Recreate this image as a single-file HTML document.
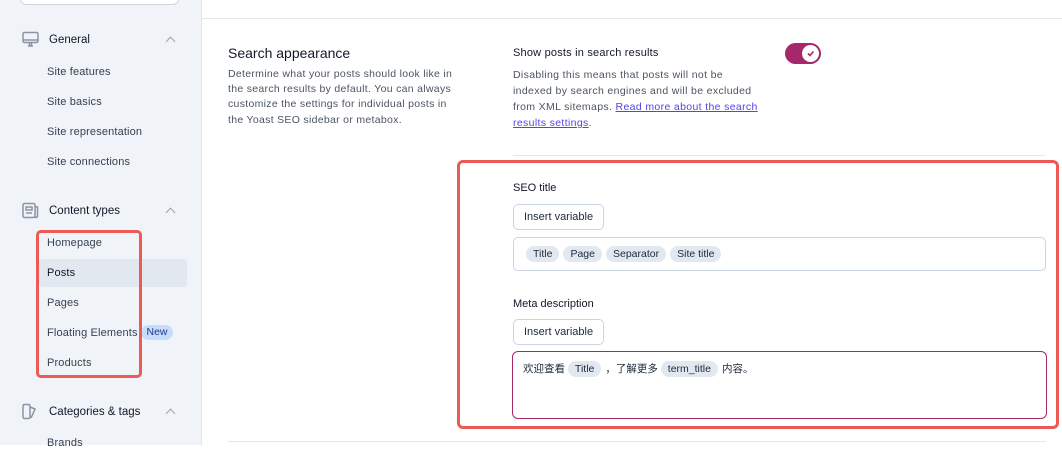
<!DOCTYPE html><html><head><style>
*{box-sizing:border-box;margin:0;padding:0}
body{width:1062px;height:445px;overflow:hidden;font-family:"Liberation Sans","Noto Sans CJK SC",sans-serif;font-size:11px;color:#1e293b;background:#fff;position:relative}
.a{position:absolute}
.side{left:0;top:0;width:202px;height:445px;background:#f0f3f8;border-right:1px solid #e2e8f0}
.sub{left:47px;color:#374151;font-size:11px;letter-spacing:0.15px}
.hd{left:49px;font-size:11.5px;color:#111827}
.chev{left:167px;width:7px;height:7px;border-left:1.5px solid #9ca3af;border-top:1.5px solid #9ca3af;transform:rotate(45deg)}
.btn{border:1px solid #cbd5e1;border-radius:5px;background:#fff;font-size:11px;padding:0 10px;line-height:24px;color:#1e293b}
.pill{display:inline-block;background:#e2e8f0;border-radius:9px;padding:0 7px;line-height:16px;margin-right:4px;font-size:10.5px}
</style></head><body>
<div class="a side"></div>
<div class="a" style="left:20px;top:-10px;width:159px;height:15px;border:1px solid #d1d5db;border-radius:6px;background:#fff"></div>
<svg class="a" style="left:22px;top:31px" width="17" height="17" viewBox="0 0 17 17" fill="none" stroke="#8a94a6" stroke-width="1.5"><rect x="1" y="1.5" width="15" height="10" rx="1.5"/><path d="M1 9h15M6 15h5M7.5 12v3M9.5 12v3"/></svg>
<div class="a hd" style="top:34px">General</div><div class="a chev" style="top:38px"></div>
<div class="a sub" style="top:66px">Site features</div>
<div class="a sub" style="top:96px">Site basics</div>
<div class="a sub" style="top:126px">Site representation</div>
<div class="a sub" style="top:156px">Site connections</div>
<svg class="a" style="left:22px;top:202px" width="17" height="17" viewBox="0 0 17 17" fill="none" stroke="#8a94a6" stroke-width="1.5"><rect x="1" y="1.5" width="12" height="14" rx="1.5"/><path d="M13 5h2.5v9a1.5 1.5 0 0 1-3 0M4 5h6v3H4zM4 11h6"/></svg>
<div class="a hd" style="top:205px">Content types</div><div class="a chev" style="top:209px"></div>
<div class="a" style="left:39px;top:259px;width:148px;height:28px;background:#e2e8f0;border-radius:4px"></div>
<div class="a sub" style="top:237px">Homepage</div>
<div class="a sub" style="top:267px;color:#111827">Posts</div>
<div class="a sub" style="top:297px">Pages</div>
<div class="a sub" style="top:327px">Floating Elements</div>
<div class="a" style="left:141px;top:325px;width:32px;height:15px;background:#c7dcfb;border-radius:8px;font-size:10.5px;color:#1e3a8a;text-align:center;line-height:15px">New</div>
<div class="a sub" style="top:357px">Products</div>
<div class="a" style="left:36px;top:230px;width:106px;height:148px;border:3px solid #ec5a55;border-radius:5px"></div>
<svg class="a" style="left:22px;top:403px" width="17" height="17" viewBox="0 0 17 17" fill="none" stroke="#8a94a6" stroke-width="1.5"><rect x="1" y="1.5" width="7" height="14" rx="1.5"/><path d="M8 4l5 2-4 9M4 13h.1"/></svg>
<div class="a hd" style="top:406px">Categories &amp; tags</div><div class="a chev" style="top:410px"></div>
<div class="a sub" style="top:437px">Brands</div>
<div class="a" style="left:202px;top:18px;width:860px;height:1px;background:#e5e7eb"></div>
<div class="a" style="left:228px;top:45px;font-size:14px;color:#111827">Search appearance</div>
<div class="a" style="left:228px;top:67px;width:233px;font-size:10.5px;line-height:15.2px;color:#4b5563;letter-spacing:0.3px">Determine what your posts should look like in the search results by default. You can always customize the settings for individual posts in the Yoast SEO sidebar or metabox.</div>
<div class="a" style="left:513px;top:47px;font-size:11px;color:#111827;letter-spacing:0.2px">Show posts in search results</div>
<div class="a" style="left:513px;top:67px;width:250px;font-size:10.5px;line-height:16px;color:#4b5563;letter-spacing:0.35px">Disabling this means that posts will not be indexed by search engines and will be excluded from XML sitemaps. <span style="color:#4f46e5;text-decoration:underline">Read more about the search results settings</span>.</div>
<div class="a" style="left:785px;top:43px;width:36px;height:21px;background:#a4286a;border-radius:11px"></div>
<div class="a" style="left:802px;top:45px;width:17px;height:17px;background:#fff;border-radius:50%"></div>
<svg class="a" style="left:805px;top:48px" width="11" height="11" viewBox="0 0 11 11" fill="none" stroke="#a4286a" stroke-width="1.6"><path d="M3 5.5l2 2 3.5-4"/></svg>
<div class="a" style="left:513px;top:155px;width:532px;height:1px;background:#e5e7eb"></div>
<div class="a" style="left:457px;top:160px;width:602px;height:269px;border:3px solid #ec5a55;border-radius:6px"></div>
<div class="a" style="left:513px;top:182px;font-size:11px;color:#111827">SEO title</div>
<div class="a btn" style="left:513px;top:204px;height:26px">Insert variable</div>
<div class="a" style="left:513px;top:237px;width:533px;height:34px;border:1px solid #cbd5e1;border-radius:5px;padding:8px 0 0 12px"><span class="pill">Title</span><span class="pill">Page</span><span class="pill">Separator</span><span class="pill">Site title</span></div>
<div class="a" style="left:513px;top:298px;font-size:11px;color:#111827">Meta description</div>
<div class="a btn" style="left:513px;top:319px;height:26px">Insert variable</div>
<div class="a" style="left:512px;top:351px;width:535px;height:68px;border:1.5px solid #a4286a;border-radius:6px;padding:9px 0 0 10px;font-size:10.5px">欢迎查看 <span class="pill">Title</span>，了解更多 <span class="pill">term_title</span>内容。</div>
<div class="a" style="left:228px;top:441px;width:818px;height:1px;background:#e5e7eb"></div>
</body></html>
